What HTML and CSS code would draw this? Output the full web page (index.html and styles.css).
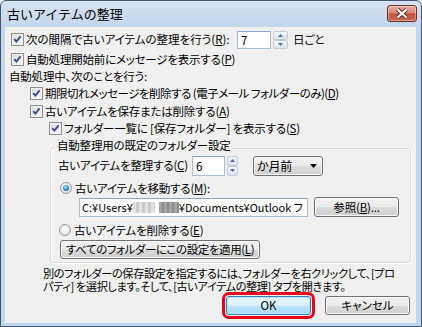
FILE: index.html
```html
<!DOCTYPE html>
<html lang="ja">
<head>
<meta charset="utf-8">
<title>古いアイテムの整理</title>
<link rel="stylesheet" href="styles.css">
</head>
<body>
<div class="window">
  <div class="titlebar">
    <span class="title">古いアイテムの整理</span>
    <span class="close"><svg width="16" height="11" viewBox="0 0 16 11"><path d="M3.5 1.5 L12.5 9.5 M12.5 1.5 L3.5 9.5" stroke="#5a2c24" stroke-width="4.2" fill="none"/><path d="M3.5 1.5 L12.5 9.5 M12.5 1.5 L3.5 9.5" stroke="#fff" stroke-width="2.2" fill="none"/></svg></span>
  </div>
  <div class="client">
    <div class="row r1 ind1">
      <span class="cb"><svg width="11" height="11" viewBox="0 0 11 11"><path d="M2.2 5.2 L4.4 7.6 L8.6 2.4" fill="none" stroke="#3a4f8c" stroke-width="1.9"/></svg></span>
      <span class="lbl w-r1">次の間隔で古いアイテムの整理を行う(<u>R</u>):</span>
      <span class="field f-r1">7</span>
      <span class="spin s-r1"><i><svg width="5" height="3" viewBox="0 0 5 3"><path d="M0 3 L2.5 0 L5 3Z" fill="#4d6ea8"/></svg></i><i><svg width="5" height="3" viewBox="0 0 5 3"><path d="M0 0 L2.5 3 L5 0Z" fill="#4d6ea8"/></svg></i></span>
      <span class="unit">日ごと</span>
    </div>
    <div class="row h18 ind1">
      <span class="cb"><svg width="11" height="11" viewBox="0 0 11 11"><path d="M2.2 5.2 L4.4 7.6 L8.6 2.4" fill="none" stroke="#3a4f8c" stroke-width="1.9"/></svg></span>
      <span class="lbl">自動処理開始前にメッセージを表示する(<u>P</u>)</span>
    </div>
    <div class="row h17">
      <span class="lbl">自動処理中、次のことを行う:</span>
    </div>
    <div class="row h17 ind2">
      <span class="cb"><svg width="11" height="11" viewBox="0 0 11 11"><path d="M2.2 5.2 L4.4 7.6 L8.6 2.4" fill="none" stroke="#3a4f8c" stroke-width="1.9"/></svg></span>
      <span class="lbl tight">期限切れメッセージを削除する (電子メール フォルダーのみ)(<u>D</u>)</span>
    </div>
    <div class="row h18 ind2">
      <span class="cb"><svg width="11" height="11" viewBox="0 0 11 11"><path d="M2.2 5.2 L4.4 7.6 L8.6 2.4" fill="none" stroke="#3a4f8c" stroke-width="1.9"/></svg></span>
      <span class="lbl">古いアイテムを保存または削除する(<u>A</u>)</span>
    </div>
    <div class="row h17 ind3">
      <span class="cb"><svg width="11" height="11" viewBox="0 0 11 11"><path d="M2.2 5.2 L4.4 7.6 L8.6 2.4" fill="none" stroke="#3a4f8c" stroke-width="1.9"/></svg></span>
      <span class="lbl">フォルダー一覧に [保存フォルダー] を表示する(<u>S</u>)</span>
    </div>

    <div class="group">
      <span class="gtitle">自動整理用の既定のフォルダー設定</span>
      <div class="row rc">
        <span class="lbl w-rc">古いアイテムを整理する(<u>C</u>)</span>
        <span class="field f-rc">6</span>
        <span class="spin s-rc"><i><svg width="5" height="3" viewBox="0 0 5 3"><path d="M0 3 L2.5 0 L5 3Z" fill="#4d6ea8"/></svg></i><i><svg width="5" height="3" viewBox="0 0 5 3"><path d="M0 0 L2.5 3 L5 0Z" fill="#4d6ea8"/></svg></i></span>
        <span class="combo"><span>か月前</span><svg width="7" height="4" viewBox="0 0 7 4"><path d="M0 0 L7 0 L3.5 4Z" fill="#000"/></svg></span>
      </div>
      <div class="row h18 rm">
        <span class="radio on"></span>
        <span class="lbl">古いアイテムを移動する(<u>M</u>):</span>
      </div>
      <div class="row rp">
        <span class="field path">C:¥Users¥<span class="blur"><b></b><b></b></span>¥Documents¥Outlook フ</span>
        <span class="btn browse">参照(<u>B</u>)...</span>
      </div>
      <div class="row h18 re">
        <span class="radio"></span>
        <span class="lbl">古いアイテムを削除する(<u>E</u>)</span>
      </div>
      <div class="row ra">
        <span class="btn apply">すべてのフォルダーにこの設定を適用(<u>L</u>)</span>
      </div>
    </div>

    <p class="note">別のフォルダーの保存設定を指定するには、フォルダーを右クリックして、[プロ<br>パティ] を選択します。そして、[古いアイテムの整理] タブを開きます。</p>

    <div class="buttons">
      <span class="btn ok">OK</span>
      <span class="btn">キャンセル</span>
    </div>
  </div>
</div>
</body>
</html>
```

FILE: styles.css
```css
* { box-sizing: border-box; margin: 0; padding: 0; }
html, body { width: 422px; height: 327px; overflow: hidden; background: #fff; }
body {
  font-family: "Noto Sans CJK JP", "Noto Sans", sans-serif;
  font-size: 11.5px;
  line-height: 13px;
  color: #000;
  font-feature-settings: "palt";
  letter-spacing: -0.2px;
}
u { text-decoration: underline; text-underline-offset: 1px; }

.window {
  width: 422px;
  height: 327px;
  display: flex;
  flex-direction: column;
  padding: 0 5px 3px 4px;
  border: 1px solid #41576f;
  border-radius: 6px 6px 0 0;
  background: linear-gradient(#d6e3f2, #c3d6ec 26px, #c1d5ec);
}

.titlebar {
  height: 26px;
  flex: none;
  display: flex;
  justify-content: space-between;
  align-items: flex-start;
}
.title {
  font-size: 13px;
  line-height: 16px;
  margin: 5px 0 0 2px;
  font-feature-settings: normal;
  letter-spacing: 0;
}
.close {
  width: 30px;
  height: 17px;
  margin: 4px -1px 0 0;
  border: 1px solid #6a3128;
  border-radius: 3px;
  background: linear-gradient(#e6ada0, #d98a78 45%, #c4533f 52%, #cc6b56);
  box-shadow: inset 0 0 0 1px rgba(255, 255, 255, .35);
  display: flex;
  align-items: center;
  justify-content: center;
}

.client {
  flex: 1;
  background: #f0f0f0;
  display: flex;
  flex-direction: column;
  padding: 2px 0 0 4px;
}

.row { display: flex; align-items: center; flex: none; white-space: nowrap; }
.r1 { height: 21px; }
.h18 { height: 18px; }
.h17 { height: 17px; }
.ind1 { padding-left: 2px; }
.ind2 { padding-left: 21px; }
.ind3 { padding-left: 40px; }
.tight { letter-spacing: -0.5px; }

.cb {
  width: 13px;
  height: 13px;
  flex: none;
  margin-right: 2px;
  border: 1px solid #8e8f8f;
  background: linear-gradient(135deg, #dadbdc, #f8f9fa);
  box-shadow: inset 0 0 0 1px #f2f3f4;
  display: flex;
  align-items: center;
  justify-content: center;
}

.w-r1 { width: 211px; flex: none; letter-spacing: 0; }
.field {
  background: #fff;
  border: 1px solid #a9bdd7;
  border-top-color: #8fa7c6;
  padding: 0 3px;
  line-height: 16px;
  overflow: hidden;
  white-space: nowrap;
  letter-spacing: 0;
}
.f-r1 { width: 34px; height: 18px; }
.spin {
  display: flex;
  flex-direction: column;
  flex: none;
}
.spin i {
  flex: 1;
  border: 1px solid #c3ccd8;
  border-radius: 2px;
  background: linear-gradient(#f6f8fa, #dde3ea);
  display: flex;
  align-items: center;
  justify-content: center;
}
.s-r1 { width: 15px; height: 18px; margin-left: 2px; }
.unit { margin-left: 5px; }

.group {
  flex: none;
  margin: 11px 0 0 41px;
  width: 361px;
  border: 1px solid #d5dfe5;
  border-radius: 3px;
  box-shadow: inset 1px 1px 0 #fff, 1px 1px 0 #fff;
  display: flex;
  flex-direction: column;
  padding-bottom: 3px;
}
.gtitle {
  align-self: flex-start;
  margin: -12px 0 0 4px;
  padding: 0 2px;
  background: #f0f0f0;
  line-height: 16px;
  white-space: nowrap;
}
.rc { height: 21px; margin-top: 2px; padding-left: 7px; }
.w-rc { width: 134px; flex: none; }
.f-rc { width: 33px; height: 20px; line-height: 18px; }
.s-rc { width: 11px; height: 20px; margin-left: 2px; }
.combo {
  margin-left: 15px;
  width: 70px;
  height: 20px;
  border: 1px solid #707070;
  border-radius: 3px;
  background: linear-gradient(#f2f2f2, #ebebeb 50%, #dddddd 50%, #cfcfcf);
  box-shadow: inset 0 0 0 1px #fcfcfc;
  display: flex;
  align-items: center;
  justify-content: space-between;
  padding: 0 5px 0 3px;
  font-size: 12px;
}

.rm { margin-top: 3px; padding-left: 9px; }
.radio {
  width: 12px;
  height: 12px;
  flex: none;
  margin-right: 3px;
  border-radius: 50%;
  border: 1px solid #9a9a9a;
  background: radial-gradient(circle at 45% 40%, #fdfdfd, #e3e3e3 70%, #cfcfcf);
  display: flex;
  align-items: center;
  justify-content: center;
}
.radio.on::after {
  content: "";
  width: 6px;
  height: 6px;
  border-radius: 50%;
  background: radial-gradient(circle at 40% 35%, #b8ecff, #3a95dc 45%, #0d4f94);
}

.rp { height: 20px; padding-left: 28px; }
.path { width: 229px; height: 19px; line-height: 17px; padding-left: 2px; font-size: 11px; }
.blur {
  display: inline-flex;
  width: 46px;
  height: 11px;
  vertical-align: -1px;
  gap: 4px;
}
.blur b:first-child {
  width: 22px;
  background: repeating-linear-gradient(90deg, #e2e2e2 0 3px, #cbcbcb 3px 6px);
}
.blur b:last-child {
  width: 20px;
  background: repeating-linear-gradient(90deg, #a5a5a5 0 3px, #8c8c8c 3px 5px);
}

.btn {
  height: 20px;
  border: 1px solid #707070;
  border-radius: 3px;
  background: linear-gradient(#f2f2f2, #ebebeb 50%, #dddddd 50%, #cfcfcf);
  box-shadow: inset 0 0 0 1px #fcfcfc;
  display: flex;
  align-items: center;
  justify-content: center;
  white-space: nowrap;
  flex: none;
}
.browse { width: 85px; margin-left: 6px; }
.re { margin-top: 4px; padding-left: 8px; }
.ra { margin-top: 1px; padding-left: 9px; }
.apply { width: 200px; height: 19px; letter-spacing: -0.4px; }

.note {
  margin: 4px 0 0 34px;
  white-space: nowrap;
  line-height: 13px;
  font-size: 11.2px;
  letter-spacing: -0.4px;
}

.buttons {
  display: flex;
  justify-content: flex-end;
  gap: 14px;
  margin-top: 3px;
  padding-right: 6px;
}
.buttons .btn { width: 85px; height: 19px; letter-spacing: 0; }
.btn.ok {
  border-color: #3c7fb1;
  background: linear-gradient(#eaf6fd, #d9f0fc 50%, #bee6fd 50%, #a7d9f5);
  box-shadow: inset 0 0 0 1px #b7e4f8;
  outline: 3px solid #e8001c;
  outline-offset: 1px;
}
```
